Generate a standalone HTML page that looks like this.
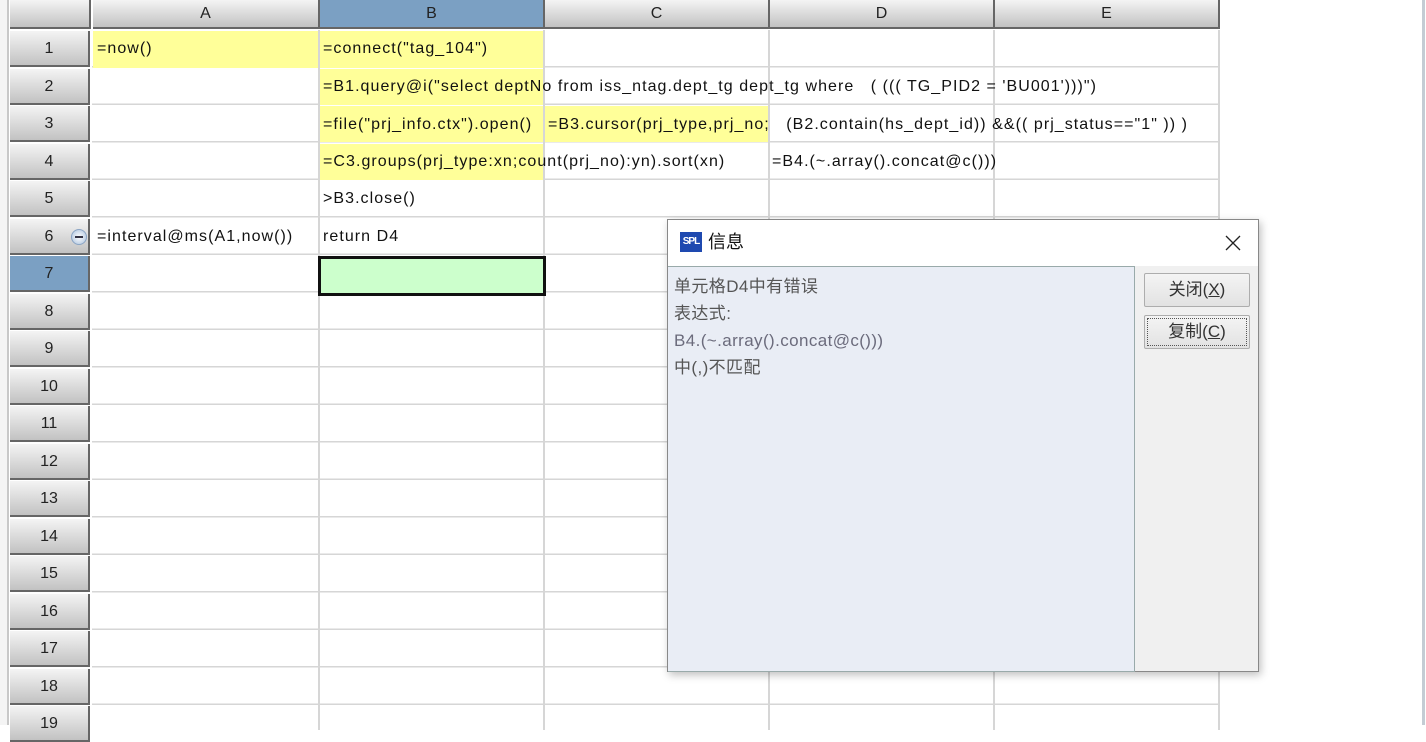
<!DOCTYPE html>
<html><head><meta charset="utf-8"><style>
*{margin:0;padding:0;box-sizing:border-box}
body{width:1426px;height:725px;overflow:hidden;background:#fff;position:relative;font-family:"Liberation Sans","Noto Sans CJK SC",sans-serif;font-size:16px;color:#111}
.lb{position:absolute;left:0;top:0;width:9px;height:725px;background:#f4f4f4;border-right:2px solid #c8c8c8}
.grid{position:absolute;left:92px;top:30px;width:1128px;height:700px;
background:repeating-linear-gradient(to bottom,transparent 0,transparent 36px,#d6d6d6 36px,#d6d6d6 37.5px)}
.vl{position:absolute;top:30px;width:2px;height:700px;background:#d6d6d6}
.ch{position:absolute;top:0;height:29px;background:linear-gradient(#f4f4f4,#c2c2c2);border-right:2px solid #666;border-bottom:2px solid #666;text-align:center;line-height:28px;font-size:16px;color:#222}
.rh{position:absolute;left:10px;width:80px;height:36px;background:linear-gradient(#f4f4f4,#c2c2c2);border-right:2px solid #666;border-bottom:2px solid #666;text-align:center;line-height:36px;color:#222;font-size:16px}
.y{position:absolute;background:#ffff99}
.t{position:absolute;white-space:pre;line-height:20px;letter-spacing:1.05px}
.dlg{position:absolute;left:667px;top:219px;width:592px;height:453px;background:#f0f0f0;border:1px solid #888;box-shadow:2px 3px 8px rgba(0,0,0,.25)}
.btn{position:absolute;left:476px;width:106px;height:34px;border:1px solid #adadad;background:linear-gradient(#f4f4f4,#e2e2e2);border-radius:2px;text-align:center;line-height:32px;font-size:17px;color:#333}
</style></head><body>
<div class="lb"></div>
<div style="position:absolute;left:1422px;top:0;width:3px;height:725px;background:#c4ccd4"></div>
<div class="grid"></div>
<div class="vl" style="left:318px"></div>
<div class="vl" style="left:543px"></div>
<div class="vl" style="left:768px"></div>
<div class="vl" style="left:993px"></div>
<div class="vl" style="left:1218px"></div>
<div class="ch" style="left:10px;width:81px"></div>
<div class="ch" style="left:93px;width:227px">A</div>
<div class="ch" style="left:320px;width:225px;background:#7ba0c3">B</div>
<div class="ch" style="left:545px;width:225px">C</div>
<div class="ch" style="left:770px;width:225px">D</div>
<div class="ch" style="left:995px;width:225px">E</div>

<div class="rh" style="top:31px">1</div>
<div class="rh" style="top:68.5px">2</div>
<div class="rh" style="top:106px">3</div>
<div class="rh" style="top:143.5px">4</div>
<div class="rh" style="top:181px">5</div>
<div class="rh" style="top:218.5px">6</div>
<div class="rh" style="top:256px;background:#7ba0c3">7</div>
<div class="rh" style="top:293.5px">8</div>
<div class="rh" style="top:331px">9</div>
<div class="rh" style="top:368.5px">10</div>
<div class="rh" style="top:406px">11</div>
<div class="rh" style="top:443.5px">12</div>
<div class="rh" style="top:481px">13</div>
<div class="rh" style="top:518.5px">14</div>
<div class="rh" style="top:556px">15</div>
<div class="rh" style="top:593.5px">16</div>
<div class="rh" style="top:631px">17</div>
<div class="rh" style="top:668.5px">18</div>
<div class="rh" style="top:706px">19</div>
<div style="position:absolute;left:71px;top:229px;width:16px;height:16px;border-radius:50%;background:radial-gradient(#fff,#a8c0dc);border:1px solid #8aa4c4"><div style="position:absolute;left:3px;top:6px;width:8px;height:2px;background:#334"></div></div>

<div class="y" style="left:93px;top:31px;width:225px;height:37px"></div>
<div class="y" style="left:320px;top:31px;width:223px;height:37px"></div>
<div class="y" style="left:320px;top:69px;width:223px;height:36px"></div>
<div class="y" style="left:320px;top:106px;width:223px;height:36px"></div>
<div class="y" style="left:545px;top:106px;width:223px;height:36px"></div>
<div class="y" style="left:320px;top:144px;width:223px;height:36px"></div>
<div style="position:absolute;left:318px;top:256px;width:228px;height:40px;background:#ccffcc;border:3px solid #111"></div>

<div class="t" style="left:97px;top:39px">=now()</div>
<div class="t" style="left:323px;top:39px">=connect("tag_104")</div>
<div class="t" style="left:323px;top:77px">=B1.query@i("select deptNo from iss_ntag.dept_tg dept_tg where   ( ((( TG_PID2 = 'BU001')))")</div>
<div class="t" style="left:323px;top:115px">=file("prj_info.ctx").open()</div>
<div class="t" style="left:548px;top:115px">=B3.cursor(prj_type,prj_no;   (B2.contain(hs_dept_id)) &amp;&amp;(( prj_status=="1" )) )</div>
<div class="t" style="left:323px;top:152px">=C3.groups(prj_type:xn;count(prj_no):yn).sort(xn)</div>
<div class="t" style="left:772px;top:152px">=B4.(~.array().concat@c()))</div>
<div class="t" style="left:323px;top:189px">&gt;B3.close()</div>
<div class="t" style="left:97px;top:227px">=interval@ms(A1,now())</div>
<div class="t" style="left:323px;top:227px">return D4</div>

<div class="dlg">
 <div style="position:absolute;left:0;top:0;width:590px;height:46px;background:#fff"></div>
 <div style="position:absolute;left:12px;top:12px;width:22px;height:20px;background:#1e49b0;color:#fff;font-size:10px;font-weight:bold;line-height:20px;text-align:center;letter-spacing:-1px">SPL</div>
 <div style="position:absolute;left:40px;top:11px;font-size:18px;line-height:22px">信息</div>
 <svg style="position:absolute;left:557px;top:15px" width="16" height="16"><path d="M1 1L15 15M15 1L1 15" stroke="#222" stroke-width="1.3"/></svg>
 <div style="position:absolute;left:0;top:46px;width:467px;height:406px;background:#e9edf5;border:1px solid #9aa;border-left:none"></div>
 <div style="position:absolute;left:6px;top:53px;font-size:17px;line-height:27px;color:#555;letter-spacing:0.4px">单元格D4中有错误<br>表达式:<br><span style="color:#6b6b7c">B4.(~.array().concat@c()))</span><br>中(,)不匹配</div>
 <div class="btn" style="top:53px">关闭(<u>X</u>)</div>
 <div class="btn" style="top:95px"><div style="position:absolute;inset:2px;border:1px dotted #555"></div>复制(<u>C</u>)</div>
</div>
</body></html>
